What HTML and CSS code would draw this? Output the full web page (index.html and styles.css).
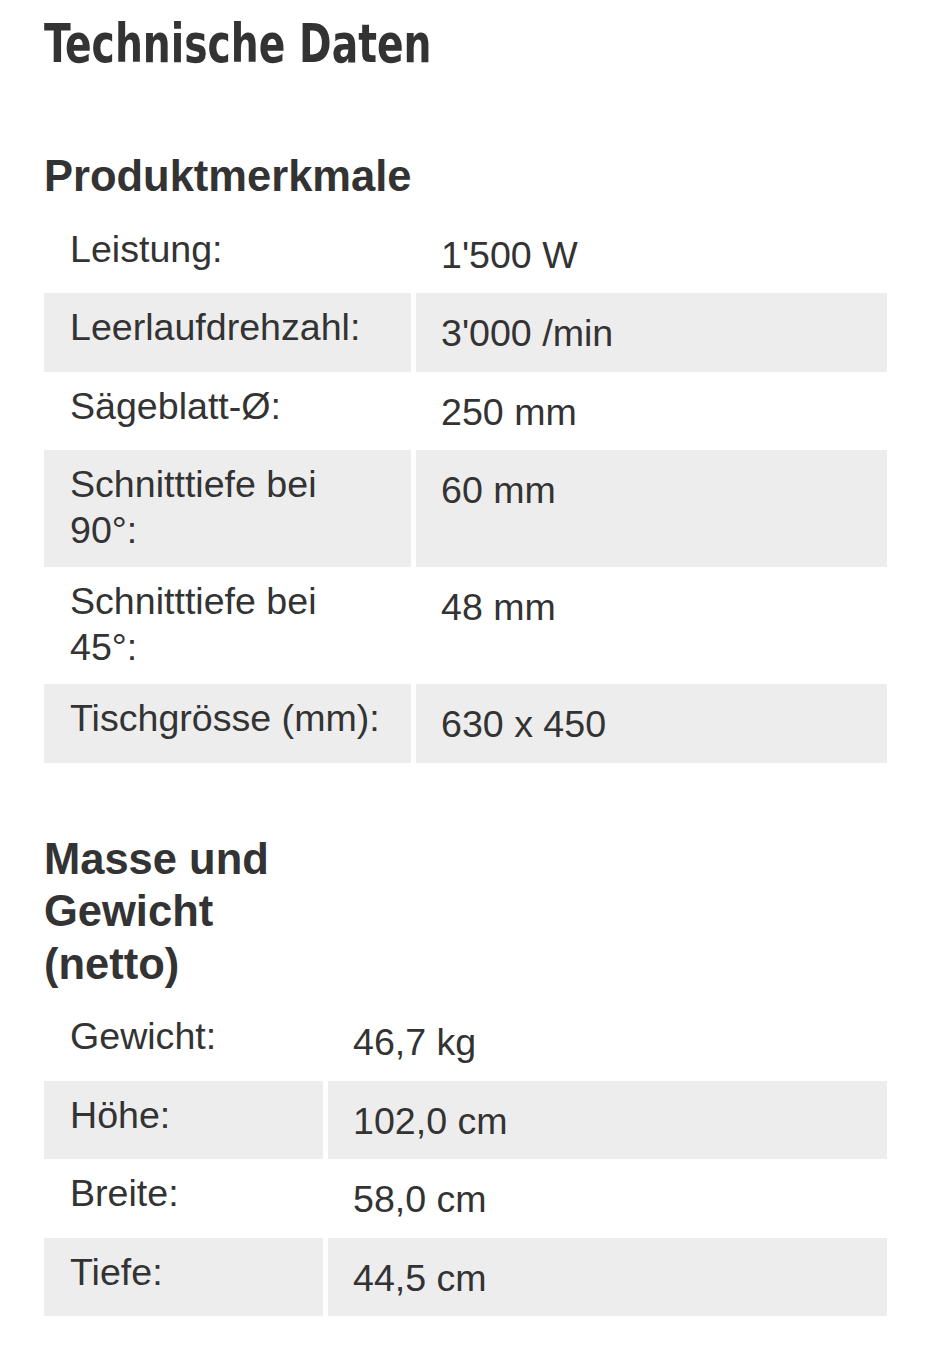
FILE: index.html
```html
<!DOCTYPE html>
<html lang="de">
<head>
<meta charset="utf-8">
<title>Technische Daten</title>
<link rel="stylesheet" href="styles.css">
</head>
<body>
<main class="page">
  <h1 class="title"><span class="title-text">Technische Daten</span></h1>

  <section class="group">
    <h2 class="group-title">Produktmerkmale</h2>
    <table class="spec spec-wide">
      <colgroup><col class="c-label"><col></colgroup>
      <tbody>
        <tr><td class="lbl">Leistung:</td><td class="val">1'500 W</td></tr>
        <tr><td class="lbl">Leerlaufdrehzahl:</td><td class="val">3'000 /min</td></tr>
        <tr><td class="lbl">Sägeblatt-Ø:</td><td class="val">250 mm</td></tr>
        <tr><td class="lbl">Schnitttiefe bei 90°:</td><td class="val">60 mm</td></tr>
        <tr><td class="lbl">Schnitttiefe bei 45°:</td><td class="val">48 mm</td></tr>
        <tr><td class="lbl">Tischgrösse (mm):</td><td class="val">630 x 450</td></tr>
      </tbody>
    </table>
  </section>

  <section class="group group-second">
    <h2 class="group-title narrow">Masse und Gewicht (netto)</h2>
    <table class="spec spec-short">
      <colgroup><col class="c-label"><col></colgroup>
      <tbody>
        <tr><td class="lbl">Gewicht:</td><td class="val">46,7 kg</td></tr>
        <tr><td class="lbl">Höhe:</td><td class="val">102,0 cm</td></tr>
        <tr><td class="lbl">Breite:</td><td class="val">58,0 cm</td></tr>
        <tr><td class="lbl">Tiefe:</td><td class="val">44,5 cm</td></tr>
      </tbody>
    </table>
  </section>
</main>
</body>
</html>
```

FILE: styles.css
```css
html, body {
  margin: 0;
  padding: 0;
  background: #ffffff;
}

body {
  font-family: "Liberation Sans", Arial, sans-serif;
  color: #333333;
}

.page {
  width: 843px;
  padding: 12px 0 0 44px;
}

.title {
  margin: 0;
  font-family: "DejaVu Sans Condensed", "DejaVu Sans", sans-serif;
  font-weight: 700;
  font-size: 54px;
  line-height: 64px;
  color: #333333;
}

.title-text {
  display: inline-block;
  transform: scaleX(0.808);
  transform-origin: 0 50%;
  white-space: nowrap;
}

.group {
  margin-top: 74px;
}

.group-second {
  margin-top: 70px;
}

.group-title {
  margin: 0 0 12px 0;
  font-size: 43.5px;
  line-height: 52.5px;
  font-weight: 700;
  color: #333333;
}

.group-title.narrow {
  width: 290px;
}

.spec {
  width: 843px;
  table-layout: fixed;
  border-collapse: separate;
  border-spacing: 0;
  font-size: 37.6px;
  line-height: 45.5px;
  color: #333333;
}

.spec-wide .c-label {
  width: 367px;
}

.spec-short .c-label {
  width: 279px;
}

.spec td {
  vertical-align: top;
}

.spec .lbl {
  padding: 12px 26px 14px 26px;
}

.spec .val {
  padding: 18px 10px 15px 25px;
  border-left: 5px solid #ffffff;
}

.spec tr:nth-child(even) td {
  background: #ededed;
}
```
